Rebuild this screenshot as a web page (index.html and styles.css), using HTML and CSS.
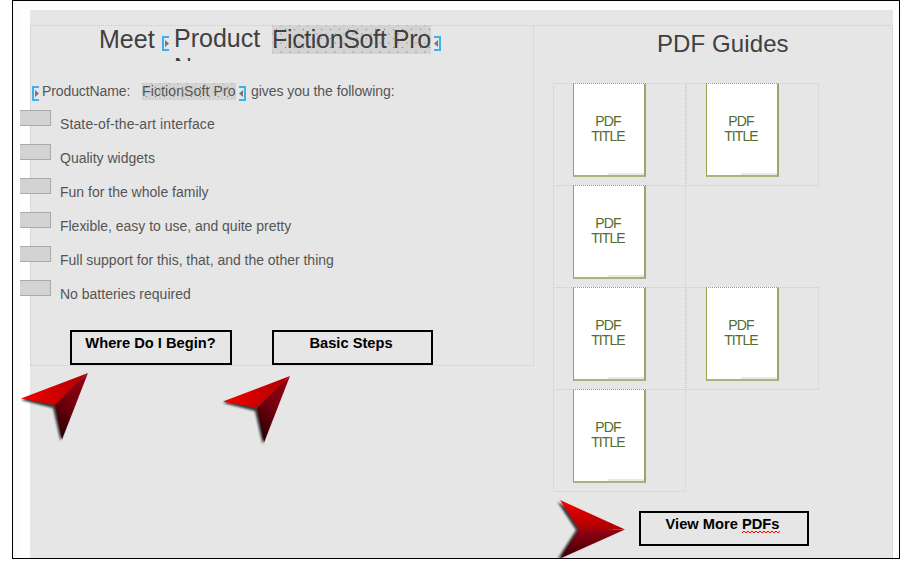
FILE: index.html
```html
<!DOCTYPE html>
<html lang="en">
<head>
<meta charset="utf-8">
<title>Meet FictionSoft Pro</title>
<link rel="stylesheet" href="styles.css">
</head>
<body>
<svg class="defs" width="0" height="0" aria-hidden="true">
  <defs>
    <linearGradient id="lit" x1="0" y1="0" x2="1" y2="0"><stop offset="0" stop-color="#f50000"/><stop offset="1" stop-color="#ac0000"/></linearGradient>
    <linearGradient id="dark" x1=".8" y1="0" x2=".3" y2="1"><stop offset="0" stop-color="#900014"/><stop offset=".5" stop-color="#74000e"/><stop offset="1" stop-color="#2c0004"/></linearGradient>
    <linearGradient id="lit-down" x1="0" y1="0" x2="0" y2="1"><stop offset="0" stop-color="#fa0000"/><stop offset="1" stop-color="#a80000"/></linearGradient>
    <linearGradient id="dark-down" x1="0" y1="0" x2="0" y2="1"><stop offset="0" stop-color="#980014"/><stop offset="1" stop-color="#3a0006"/></linearGradient>
    <filter id="soft" x="-20%" y="-20%" width="140%" height="140%"><feGaussianBlur stdDeviation="1"/></filter>
    <symbol id="pointer" viewBox="0 0 74 76">
      <path d="M3 29 66 6 42.500 70 35 37Z" fill="#000" opacity=".75" filter="url(#soft)"/>
      <path d="M3 27.500 70 2 37 34Z" fill="url(#lit)"/>
      <path d="M70 2 44 68.500 37 34Z" fill="url(#dark)"/>
    </symbol>
    <symbol id="open" viewBox="0 0 7 15"><path d="M7 1H1V14H7" fill="none" stroke="#3bb2ef" stroke-width="2"/><path d="M3 4 7 7.500 3 11Z" fill="#777"/></symbol>
    <symbol id="close" viewBox="0 0 7 15"><path d="M0 1H6V14H0" fill="none" stroke="#3bb2ef" stroke-width="2"/><path d="M4 4 0 7.500 4 11Z" fill="#777"/></symbol>
  </defs>
</svg>
<div class="frame">
  <main class="page">
    <section class="intro">
      <h1 class="headline">
        <span class="meet">Meet</span>
        <svg class="token"><use href="#open"/></svg>
        <span class="product">Product<br>Name:</span>
        <span class="mark">FictionSoft Pro</span>
        <svg class="token"><use href="#close"/></svg>
      </h1>
      <p class="lead">
        <svg class="token"><use href="#open"/></svg>
        <span class="label">ProductName:</span>
        <span class="mark">FictionSoft Pro</span>
        <svg class="token"><use href="#close"/></svg>
        <span class="gives">gives you the following:</span>
      </p>
      <ul class="features">
        <li><i class="tag"></i><span class="wide">State-of-the-art interface</span></li>
        <li><i class="tag"></i><span>Quality widgets</span></li>
        <li><i class="tag"></i><span>Fun for the whole family</span></li>
        <li><i class="tag"></i><span class="tight">Flexible, easy to use, and quite pretty</span></li>
        <li><i class="tag"></i><span class="tight">Full support for this, that, and the other thing</span></li>
        <li><i class="tag"></i><span>No batteries required</span></li>
      </ul>
      <div class="actions">
        <div class="button begin">Where Do I Begin?
          <svg class="arrow"><use href="#pointer"/></svg></div>
        <div class="button basic">Basic Steps
          <svg class="arrow"><use href="#pointer"/></svg></div>
      </div>
    </section>
    <section class="guides">
      <h2>PDF Guides</h2>
      <div class="grid">
        <div class="row"><div class="cell"><div class="pdf">PDF<br>TITLE</div></div><div class="cell"><div class="pdf">PDF<br>TITLE</div></div></div>
        <div class="row"><div class="cell"><div class="pdf">PDF<br>TITLE</div></div></div>
        <div class="row"><div class="cell"><div class="pdf">PDF<br>TITLE</div></div><div class="cell"><div class="pdf">PDF<br>TITLE</div></div></div>
        <div class="row"><div class="cell"><div class="pdf">PDF<br>TITLE</div></div></div>
      </div>
      <div class="button more">View More <span class="typo">PDFs<svg class="squiggle" viewBox="0 0 38 4"><path d="M0 3 2 1 4 3 6 1 8 3 10 1 12 3 14 1 16 3 18 1 20 3 22 1 24 3 26 1 28 3 30 1 32 3 34 1 36 3 38 1"/></svg></span>
        <svg class="arrow-right" viewBox="0 0 74 64">
          <path d="M2.500 3 21 31 2.500 60 60 33Z" fill="#000" opacity=".75" filter="url(#soft)"/>
          <path d="M5 1 70 30.500H24Z" fill="url(#lit-down)"/>
          <path d="M5 59.500 70 30.500H24Z" fill="url(#dark-down)"/>
        </svg>
      </div>
    </section>
  </main>
</div>
</body>
</html>
```

FILE: styles.css
```css
* { box-sizing: border-box; }
body {
  margin: 0;
  background: #fff;
  font-family: "Liberation Sans", Arial, sans-serif;
  font-size: 14px;
  color: #555;
  white-space: nowrap;
}
h1, h2, p, ul { margin: 0; padding: 0; font-weight: normal; }
.defs { position: absolute; }
.frame {
  width: 888px;
  height: 559px;
  margin-left: 12px;
  padding: 9px 6px 0 7px;
  border: 1px solid #000;
  background: linear-gradient(#fff, #fff) 7px 9px no-repeat #fcfcfc;
}
.page {
  display: flex;
  align-items: flex-start;
  width: 863px;
  height: 548px;
  margin-left: 10px;
  padding-top: 15px;
  background: #e6e6e6;
}
.intro {
  width: 504px;
  height: 341px;
  border: 1px dotted #ccc;
}
.headline {
  display: flex;
  align-items: flex-start;
  height: 57px;
  padding-left: 68px;
  font-size: 25px;
  line-height: 29px;
  color: #404040;
}
.token { flex: none; width: 7px; height: 15px; }
.headline .token { margin-top: 10px; }
.meet { width: 63px; margin-top: -1px; }
.product { width: 99px; height: 37px; margin: -2px 4px 0 0; padding-left: 5px; overflow: hidden; }
.mark {
  background: radial-gradient(circle, #777 .75px, transparent .8px) 0 0 / 9px 9px,
    radial-gradient(circle, #777 .75px, transparent .8px) 4.5px 4.5px / 9px 9px, #d3d3d3;
}
.headline .mark { width: 159px; height: 29px; margin: -1px 3px 0 0; letter-spacing: -.35px; }
.lead { display: flex; align-items: flex-start; height: 27px; padding-left: 1px; line-height: 17px; }
.lead .token { margin-top: 3px; }
.label { width: 103px; padding-left: 3px; letter-spacing: -.1px; }
.lead .mark { width: 94px; margin-right: 3px; letter-spacing: .12px; }
.gives { padding-left: 5px; letter-spacing: -.05px; }
.features { list-style: none; margin-left: -11px; }
.features li { display: flex; height: 34px; line-height: 29px; }
.wide { letter-spacing: .12px; }
.tight { letter-spacing: -.02px; }
.tag { width: 31px; height: 16px; margin-right: 9px; border: 1px solid #aaa; border-left: 0; background: #d3d3d3; }
.actions { display: flex; gap: 40px; padding: 16px 0 0 39px; }
.button {
  position: relative;
  height: 35px;
  border: 2px solid #000;
  color: #000;
  font-size: 14.67px;
  font-weight: bold;
  line-height: 22px;
  text-align: center;
}
.begin { width: 162px; }
.basic { width: 161px; padding-right: 3px; }
.begin { padding-right: 1px; }
.arrow { position: absolute; left: -54px; top: 39px; width: 74px; height: 76px; }
.basic .arrow { top: 42px; }
.guides { width: 359px; height: 533px; border: 1px dotted #ccc; border-width: 1px 1px 0 0; }
.guides h2 { height: 57px; padding-left: 123px; font-size: 24px; letter-spacing: .1px; line-height: 36px; color: #404040; }
.grid { margin-left: 19px; }
.row { display: flex; height: 102px; }
.cell { width: 133px; height: 103px; padding-left: 19px; border: 1px dotted #ccc; }
.pdf {
  width: 73px;
  height: 94px;
  margin-top: -1px;
  padding-top: 30px;
  padding-right: 2px;
  border: 1px solid #94a552;
  border-top: 1px dotted #94a552;
  border-right: 2px solid #9aa66c;
  border-bottom: 2px solid #a8b578;
  background: linear-gradient(#e8e8e8, #e8e8e8) right bottom / 36px 2px no-repeat #fff;
  color: #556b2f;
  letter-spacing: -.9px;
  line-height: 15px;
  text-align: center;
}
.more { width: 170px; margin: 20px 0 0 105px; padding-right: 3px; }
.typo { position: relative; }
.squiggle { position: absolute; left: 0; top: 14px; width: 38px; height: 4px; fill: none; stroke: #f00; }
.arrow-right { position: absolute; left: -86px; top: -14px; width: 74px; height: 64px; }
```
